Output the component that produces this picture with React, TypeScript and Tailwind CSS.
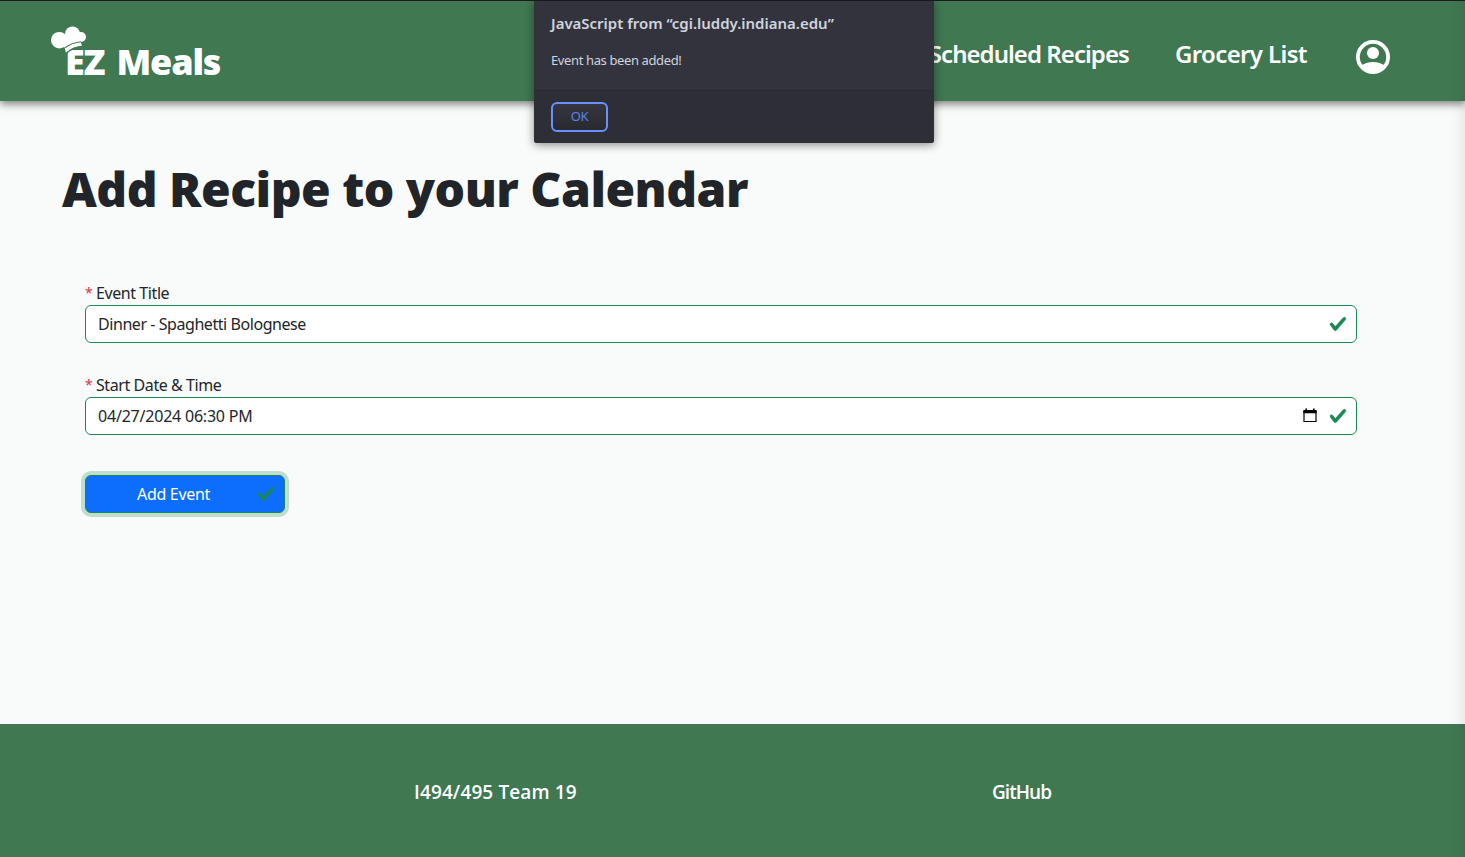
import React from "react";

function Check({ className = "" }: { className?: string }) {
  return (
    <svg viewBox="0 0 8 8" className={`h-[18px] w-[18px] shrink-0 ${className}`}>
      <path
        fill="#198754"
        stroke="#198754"
        strokeWidth="0.2"
        d="M2.3 6.73.6 4.53c-.4-1.04.46-1.4 1.1-.8l1.1 1.4 3.4-3.8c.6-.63 1.6-.27 1.2.7l-4 4.6c-.43.5-.8.4-1.1.1z"
      />
    </svg>
  );
}

function Logo() {
  return (
    <a className="relative ml-[51px] mt-[25px] block h-[54px] w-[172px] text-white">
      <svg viewBox="0 0 36 28" className="absolute left-0 top-0 z-10 h-7 w-9" fill="currentColor">
        <circle cx="8.3" cy="14.2" r="8.3" />
        <circle cx="21.5" cy="7.8" r="7.4" />
        <circle cx="30" cy="11" r="5" />
        <path d="M9 9 27 5 30 14.5 28.6 16Q19 16.8 13 22Z" />
        <path d="M13.7 22.6Q20 17.2 29.7 16.2L31 19.8Q21.5 20.4 15 26.8Z" />
        <path d="M13.2 22Q20 16.8 30 15.4" fill="none" stroke="#407852" strokeWidth="0.7" />
        <path d="M15 27.6Q21 21.2 34 20.4" fill="none" stroke="#407852" strokeWidth="1.2" />
      </svg>
      <span className="absolute left-[14px] top-[12px] whitespace-nowrap font-['Open_Sans',sans-serif] text-[36px] font-extrabold leading-[48px] tracking-[-1.2px] [word-spacing:4px]">
        EZ Meals
      </span>
    </a>
  );
}

function Header() {
  return (
    <header className="relative z-10 flex h-[101px] shrink-0 justify-between border-t border-[#1c1b22] bg-[#407852] shadow-[0_3px_8px_rgba(0,0,0,0.5)]">
      <Logo />
      <nav className="mr-[75px] flex h-[106px] items-center whitespace-nowrap font-['Noto_Sans',sans-serif] text-[24px] font-semibold text-white">
        <a className="mr-[46px] tracking-[-0.95px]">Scheduled Recipes</a>
        <a className="mr-[49px] tracking-[-0.62px]">Grocery List</a>
        <svg viewBox="0 0 34 34" className="mt-1.5 h-[34px] w-[34px]">
          <circle cx="17" cy="17" r="15.1" fill="none" stroke="#fff" strokeWidth="3.8" />
          <circle cx="17" cy="13" r="6" fill="#fff" />
          <path fill="#fff" d="M5 26Q10 22 17 22T29 26A15 15 0 0 1 5 26Z" />
        </svg>
      </nav>
    </header>
  );
}

interface FieldProps {
  label: string;
  value: string;
  valueClass: string;
  calendar?: boolean;
}

function Field({ label, value, valueClass, calendar }: FieldProps) {
  return (
    <div className="flex h-[92px] flex-col">
      <label className="flex h-6 items-center tracking-[-0.42px]">
        <span className="w-[11px] text-[14px] text-[#dc3545]">*</span>
        {label}
      </label>
      <div className="flex h-[38px] items-center rounded-md border border-[#198754] bg-white pl-3 pr-[9px]">
        <span className={`grow ${valueClass}`}>{value}</span>
        {calendar && (
          <svg viewBox="0 0 14 15" className="mb-px mr-3 h-[15px] w-[14px]">
            <path d="M1 3.5h12v10H1z" fill="none" stroke="#000" strokeWidth="1.2" />
            <path d="M.4 2h13.2v3.2H.4zM2.4.6H4V3H2.4zM10 .6h1.6V3H10z" />
          </svg>
        )}
        <Check />
      </div>
    </div>
  );
}

function AlertDialog() {
  return (
    <div className="absolute left-[534px] top-px z-20 flex h-[142px] w-[400px] flex-col overflow-hidden rounded-b-[3px] bg-[#33333d] font-['Noto_Sans',sans-serif] text-[#cfd4dd] shadow-[0_2px_10px_rgba(0,0,0,0.45)]">
      <div className="h-[89px] px-[17px] pt-[11px]">
        <h2 className="whitespace-nowrap text-[15px] font-semibold leading-[22px] tracking-[-0.01px]">
          JavaScript from “cgi.luddy.indiana.edu”
        </h2>
        <p className="mt-4 text-[13px] leading-5 tracking-[-0.38px]">Event has been added!</p>
      </div>
      <div className="grow border-t border-[#292931] bg-[#2e2e37] px-[17px] pt-[11px]">
        <button className="flex h-[30px] w-[57px] items-center justify-center rounded-md border-2 border-[#6791ff] bg-linear-to-b from-[#363640] to-[#292931] text-[13px] tracking-[-0.3px] text-[#5c82e6]">
          OK
        </button>
      </div>
    </div>
  );
}

export default function App() {
  return (
    <div className="relative flex h-[857px] w-full flex-col overflow-hidden bg-[#f9fbfa] font-['Noto_Sans',sans-serif] text-[#212529]">
      <Header />
      <AlertDialog />
      <main className="grow">
        <h1 className="ml-[62px] mt-[56px] whitespace-nowrap font-['Noto_Sans',sans-serif] text-[48px] font-black leading-[64px] tracking-[-0.5px]">
          Add Recipe to your Calendar
        </h1>
        <form className="ml-[85px] mt-[60px] w-[1272px] text-[16px] leading-6 tracking-[-0.3px]">
          <Field
            label="Event Title"
            value="Dinner - Spaghetti Bolognese"
            valueClass="tracking-[-0.44px]"
          />
          <Field
            label="Start Date & Time"
            value="04/27/2024 06:30 PM"
            valueClass="tracking-[-0.21px]"
            calendar
          />
          <button
            type="button"
            className="mt-[10px] flex h-[38px] w-[200px] items-center rounded-md border border-[#198754] bg-[#0d6efd] pl-[51px] pr-[9px] text-white shadow-[0_0_0_4px_rgba(25,135,84,0.25)]"
          >
            Add Event
            <Check className="ml-auto" />
          </button>
        </form>
      </main>
      <footer className="flex h-[133px] shrink-0 bg-[#407852] pt-[54px] font-['Open_Sans',sans-serif] text-[19px] font-semibold leading-7 text-white">
        <a className="ml-[414px] w-[578px] tracking-[0.12px]">I494/495 Team 19</a>
        <a className="tracking-[-0.95px]">GitHub</a>
      </footer>
      <div className="pointer-events-none absolute bottom-0 right-0 top-px z-10 w-4 bg-linear-to-l from-black/6 via-black/2 to-transparent" />
    </div>
  );
}
